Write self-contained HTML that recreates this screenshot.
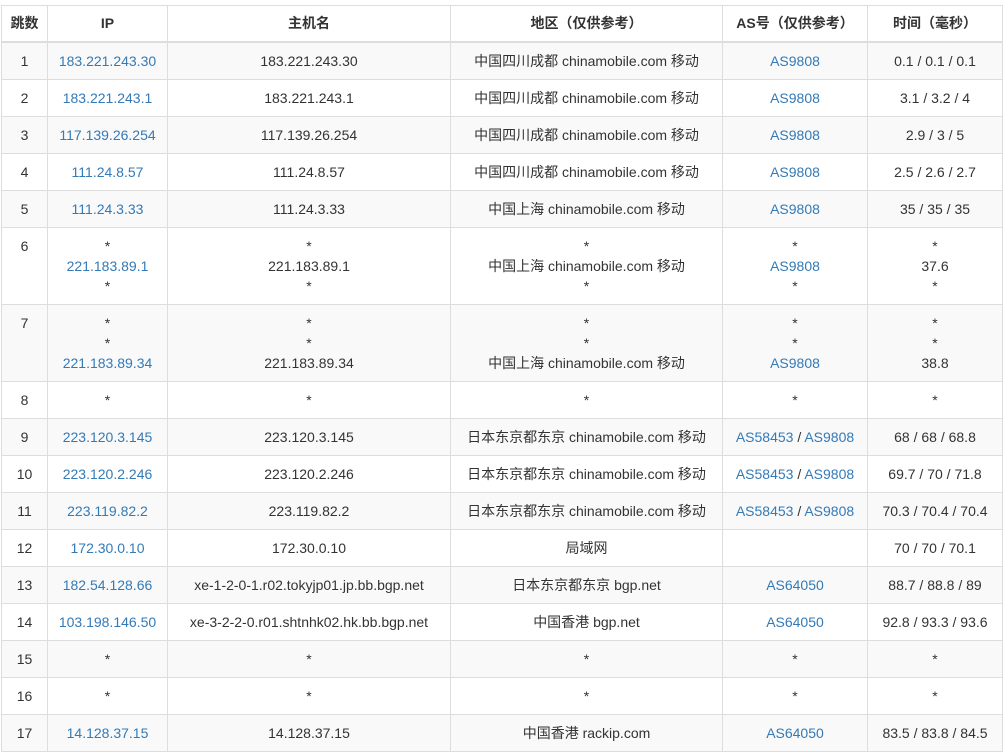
<!DOCTYPE html>
<html><head><meta charset="utf-8"><style>
body{margin:0;background:#fff;}
table{position:absolute;left:1px;top:5px;border-collapse:collapse;table-layout:fixed;width:1001px;font-family:"Liberation Sans","Noto Sans CJK SC",sans-serif;font-size:14px;color:#333;}
td,th{border:1px solid #ddd;padding:8px 4px;line-height:20px;text-align:center;vertical-align:top;white-space:nowrap;overflow:hidden;}
th{border-bottom:2px solid #ddd;font-weight:bold;padding:7px 4px 8px;}
tbody tr:nth-child(odd){background:#f9f9f9;}
a{color:#337ab7;text-decoration:none;}
</style></head><body>
<table>
<colgroup><col style="width:46px"><col style="width:120px"><col style="width:283px"><col style="width:272px"><col style="width:145px"><col style="width:135px"></colgroup>
<thead><tr><th>跳数</th><th>IP</th><th>主机名</th><th>地区（仅供参考）</th><th>AS号（仅供参考）</th><th>时间（毫秒）</th></tr></thead>
<tbody>
<tr><td>1</td><td><a>183.221.243.30</a></td><td>183.221.243.30</td><td>中国四川成都 chinamobile.com 移动</td><td><a>AS9808</a></td><td>0.1 / 0.1 / 0.1</td></tr>
<tr><td>2</td><td><a>183.221.243.1</a></td><td>183.221.243.1</td><td>中国四川成都 chinamobile.com 移动</td><td><a>AS9808</a></td><td>3.1 / 3.2 / 4</td></tr>
<tr><td>3</td><td><a>117.139.26.254</a></td><td>117.139.26.254</td><td>中国四川成都 chinamobile.com 移动</td><td><a>AS9808</a></td><td>2.9 / 3 / 5</td></tr>
<tr><td>4</td><td><a>111.24.8.57</a></td><td>111.24.8.57</td><td>中国四川成都 chinamobile.com 移动</td><td><a>AS9808</a></td><td>2.5 / 2.6 / 2.7</td></tr>
<tr><td>5</td><td><a>111.24.3.33</a></td><td>111.24.3.33</td><td>中国上海 chinamobile.com 移动</td><td><a>AS9808</a></td><td>35 / 35 / 35</td></tr>
<tr><td>6</td><td>*<br><a>221.183.89.1</a><br>*</td><td>*<br>221.183.89.1<br>*</td><td>*<br>中国上海 chinamobile.com 移动<br>*</td><td>*<br><a>AS9808</a><br>*</td><td>*<br>37.6<br>*</td></tr>
<tr><td>7</td><td>*<br>*<br><a>221.183.89.34</a></td><td>*<br>*<br>221.183.89.34</td><td>*<br>*<br>中国上海 chinamobile.com 移动</td><td>*<br>*<br><a>AS9808</a></td><td>*<br>*<br>38.8</td></tr>
<tr><td>8</td><td>*</td><td>*</td><td>*</td><td>*</td><td>*</td></tr>
<tr><td>9</td><td><a>223.120.3.145</a></td><td>223.120.3.145</td><td>日本东京都东京 chinamobile.com 移动</td><td><a>AS58453</a> / <a>AS9808</a></td><td>68 / 68 / 68.8</td></tr>
<tr><td>10</td><td><a>223.120.2.246</a></td><td>223.120.2.246</td><td>日本东京都东京 chinamobile.com 移动</td><td><a>AS58453</a> / <a>AS9808</a></td><td>69.7 / 70 / 71.8</td></tr>
<tr><td>11</td><td><a>223.119.82.2</a></td><td>223.119.82.2</td><td>日本东京都东京 chinamobile.com 移动</td><td><a>AS58453</a> / <a>AS9808</a></td><td>70.3 / 70.4 / 70.4</td></tr>
<tr><td>12</td><td><a>172.30.0.10</a></td><td>172.30.0.10</td><td>局域网</td><td></td><td>70 / 70 / 70.1</td></tr>
<tr><td>13</td><td><a>182.54.128.66</a></td><td>xe-1-2-0-1.r02.tokyjp01.jp.bb.bgp.net</td><td>日本东京都东京 bgp.net</td><td><a>AS64050</a></td><td>88.7 / 88.8 / 89</td></tr>
<tr><td>14</td><td><a>103.198.146.50</a></td><td>xe-3-2-2-0.r01.shtnhk02.hk.bb.bgp.net</td><td>中国香港 bgp.net</td><td><a>AS64050</a></td><td>92.8 / 93.3 / 93.6</td></tr>
<tr><td>15</td><td>*</td><td>*</td><td>*</td><td>*</td><td>*</td></tr>
<tr><td>16</td><td>*</td><td>*</td><td>*</td><td>*</td><td>*</td></tr>
<tr><td>17</td><td><a>14.128.37.15</a></td><td>14.128.37.15</td><td>中国香港 rackip.com</td><td><a>AS64050</a></td><td>83.5 / 83.8 / 84.5</td></tr>
</tbody></table>
</body></html>
